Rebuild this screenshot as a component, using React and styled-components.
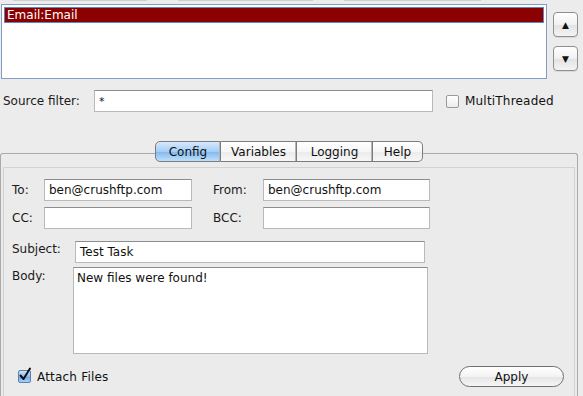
import React from "react";
import styled, { createGlobalStyle } from "styled-components";

const Global = createGlobalStyle`
  html, body { margin: 0; padding: 0; background: #ececec; }
  body { font-family: "DejaVu Sans", "Liberation Sans", sans-serif; font-size: 12px; color: #111; }
  * { box-sizing: border-box; }
`;

const Page = styled.div`
  width: 583px;
  height: 396px;
  overflow: hidden;
  background: #ececec;
  display: flex;
  flex-direction: column;
`;

const ClippedRow = styled.div`
  display: flex;
  height: 1px;
  padding-left: 13px;
  gap: 31px;
`;

const ClippedSeg = styled.div`
  width: ${(p) => p.$w}px;
  height: 1px;
  background: #cfcfcf;
`;

const TopRow = styled.div`
  display: flex;
  margin-top: 3px;
  padding-left: 1px;
`;

const ListBox = styled.div`
  width: 546px;
  height: 75px;
  background: #fff;
  border: 1px solid #7f9dc6;
  padding: 2px 2px;
`;

const ListItem = styled.div`
  height: 16px;
  line-height: 15px;
  padding-left: 2px;
  background: ${(p) => (p.$selected ? "#8b0000" : "transparent")};
  color: ${(p) => (p.$selected ? "#fff" : "#111")};
  border: 1px solid ${(p) => (p.$selected ? "#5f86c0" : "transparent")};
`;

const ArrowCol = styled.div`
  display: flex;
  flex-direction: column;
  gap: 9px;
  margin-left: 6px;
  padding-top: 8px;
`;

const ArrowBtn = styled.div`
  width: 25px;
  height: 25px;
  border: 1px solid #8f8f8f;
  border-radius: 4px;
  background: linear-gradient(#ffffff, #f1f1f1 50%, #e2e2e2 51%, #f4f4f4);
  display: flex;
  align-items: center;
  justify-content: center;
  color: #111;
  font-size: 9px;
  box-shadow: 0 1px 0 rgba(0,0,0,0.08);
`;

const FilterRow = styled.div`
  display: flex;
  align-items: center;
  margin-top: 11px;
  height: 22px;
`;

const Label = styled.div`
  width: ${(p) => p.$w}px;
  padding-left: ${(p) => p.$pl || 0}px;
  flex-shrink: 0;
  color: #1a1a1a;
  align-self: ${(p) => (p.$top ? "flex-start" : "center")};
  padding-top: ${(p) => p.$pt || 0}px;
`;

const Field = styled.div`
  width: ${(p) => p.$w}px;
  height: ${(p) => p.$h || 22}px;
  background: #fff;
  border: 1px solid #b9b9b9;
  border-top-color: #8d8d8d;
  padding: ${(p) => (p.$area ? "3px 3px" : "0 4px")};
  display: flex;
  align-items: ${(p) => (p.$area ? "flex-start" : "center")};
  flex-shrink: 0;
  color: #111;
  font-size: ${(p) => p.$fs || 12}px;
`;

const CheckBox = styled.div`
  width: 13px;
  height: 13px;
  border-radius: 2px;
  border: 1px solid ${(p) => (p.$checked ? "#5b7fae" : "#9a9a9a")};
  background: ${(p) =>
    p.$checked
      ? "linear-gradient(#cfe3fa, #8dbcee 50%, #6aa4e6 51%, #a8d2f8)"
      : "linear-gradient(#ffffff, #ececec)"};
  margin-left: ${(p) => p.$ml || 0}px;
  display: flex;
  align-items: center;
  justify-content: center;
  flex-shrink: 0;
  position: relative;
`;

const CheckText = styled.span`
  margin-left: 6px;
  color: #111;
  letter-spacing: 0.2px;
`;

const TabSection = styled.div`
  display: flex;
  flex-direction: column;
  margin-top: 29px;
  flex: 1;
`;

const TabBar = styled.div`
  display: flex;
  justify-content: center;
  position: relative;
  z-index: 1;
  margin-bottom: -9px;
  padding-right: 5px;
`;

const Tab = styled.div`
  height: 21px;
  width: ${(p) => p.$w}px;
  display: flex;
  align-items: center;
  justify-content: center;
  border: 1px solid #7c7c7c;
  border-left-width: ${(p) => (p.$first ? 1 : 0)}px;
  border-radius: ${(p) => (p.$first ? "5px 0 0 5px" : p.$last ? "0 5px 5px 0" : "0")};
  background: ${(p) =>
    p.$active
      ? "linear-gradient(#d6e9fd, #a6cdf5 50%, #80b7ef 51%, #bfe0fb)"
      : "linear-gradient(#ffffff, #f6f6f6 50%, #ebebeb 51%, #f7f7f7)"};
  box-shadow: ${(p) => (p.$last ? "none" : "inset -1px 0 0 #b5b5b5")};
  color: #111;
  font-size: 12px;
`;

const Panel = styled.div`
  flex: 1;
  margin-right: 5px;
  border: 1px solid #a9a9a9;
  border-bottom: none;
  border-radius: 3px 3px 0 0;
  background: #ebebeb;
  padding: 13px 2px 0 2px;
  display: flex;
`;

const Inner = styled.div`
  flex: 1;
  border: 1px solid #d2d2d2;
  border-bottom: none;
  background: #ebebeb;
  padding: 11px 0 0 6px;
  display: flex;
  flex-direction: column;
`;

const Row = styled.div`
  display: flex;
  align-items: center;
  margin-top: ${(p) => p.$mt || 0}px;
`;

const BottomRow = styled.div`
  display: flex;
  align-items: center;
  justify-content: space-between;
  margin-top: 12px;
  padding-left: 7px;
  padding-right: 10px;
`;

const CheckWrap = styled.div`
  display: flex;
  align-items: center;
`;

const ApplyBtn = styled.div`
  width: 105px;
  height: 21px;
  border: 1px solid #6f6f6f;
  border-radius: 11px;
  background: linear-gradient(#ffffff, #f3f3f3 50%, #e4e4e4 51%, #f6f6f6);
  display: flex;
  align-items: center;
  justify-content: center;
  color: #111;
`;

function Check() {
  return (
    <svg width="14" height="15" viewBox="0 0 14 15" style={{ position: "absolute", left: -1, top: -4 }}>
      <path d="M2.5 8.5 L5.5 12 L12 1.5" fill="none" stroke="#111" strokeWidth="2" strokeLinecap="round" strokeLinejoin="round" />
    </svg>
  );
}

export default function App() {
  return (
    <>
      <Global />
      <Page>
        <ClippedRow>
          <ClippedSeg $w={134} />
          <ClippedSeg $w={135} />
          <ClippedSeg $w={137} />
        </ClippedRow>
        <TopRow>
          <ListBox>
            <ListItem $selected>Email:Email</ListItem>
          </ListBox>
          <ArrowCol>
            <ArrowBtn>▲</ArrowBtn>
            <ArrowBtn>▼</ArrowBtn>
          </ArrowCol>
        </TopRow>
        <FilterRow>
          <Label $w={94} $pl={3}>Source filter:</Label>
          <Field $w={339} $fs={11}>*</Field>
          <CheckBox $ml={13} />
          <CheckText>MultiThreaded</CheckText>
        </FilterRow>
        <TabSection>
          <TabBar>
            <Tab $w={66} $first $active>Config</Tab>
            <Tab $w={76}>Variables</Tab>
            <Tab $w={76}>Logging</Tab>
            <Tab $w={50} $last>Help</Tab>
          </TabBar>
          <Panel>
            <Inner>
              <Row>
                <Label $w={34} $pl={2}>To:</Label>
                <Field $w={148}>ben@crushftp.com</Field>
                <Label $w={71} $pl={21}>From:</Label>
                <Field $w={167}>ben@crushftp.com</Field>
              </Row>
              <Row $mt={6}>
                <Label $w={34} $pl={2}>CC:</Label>
                <Field $w={148} />
                <Label $w={71} $pl={21}>BCC:</Label>
                <Field $w={167} />
              </Row>
              <Row $mt={12}>
                <Label $w={65} $pl={2} $top $pt={1}>Subject:</Label>
                <Field $w={350}>Test Task</Field>
              </Row>
              <Row $mt={4}>
                <Label $w={63} $pl={2} $top $pt={2}>Body:</Label>
                <Field $w={355} $h={87} $area>New files were found!</Field>
              </Row>
              <BottomRow>
                <CheckWrap>
                  <CheckBox $checked $ml={1}>
                    <Check />
                  </CheckBox>
                  <CheckText>Attach Files</CheckText>
                </CheckWrap>
                <ApplyBtn>Apply</ApplyBtn>
              </BottomRow>
            </Inner>
          </Panel>
        </TabSection>
      </Page>
    </>
  );
}
